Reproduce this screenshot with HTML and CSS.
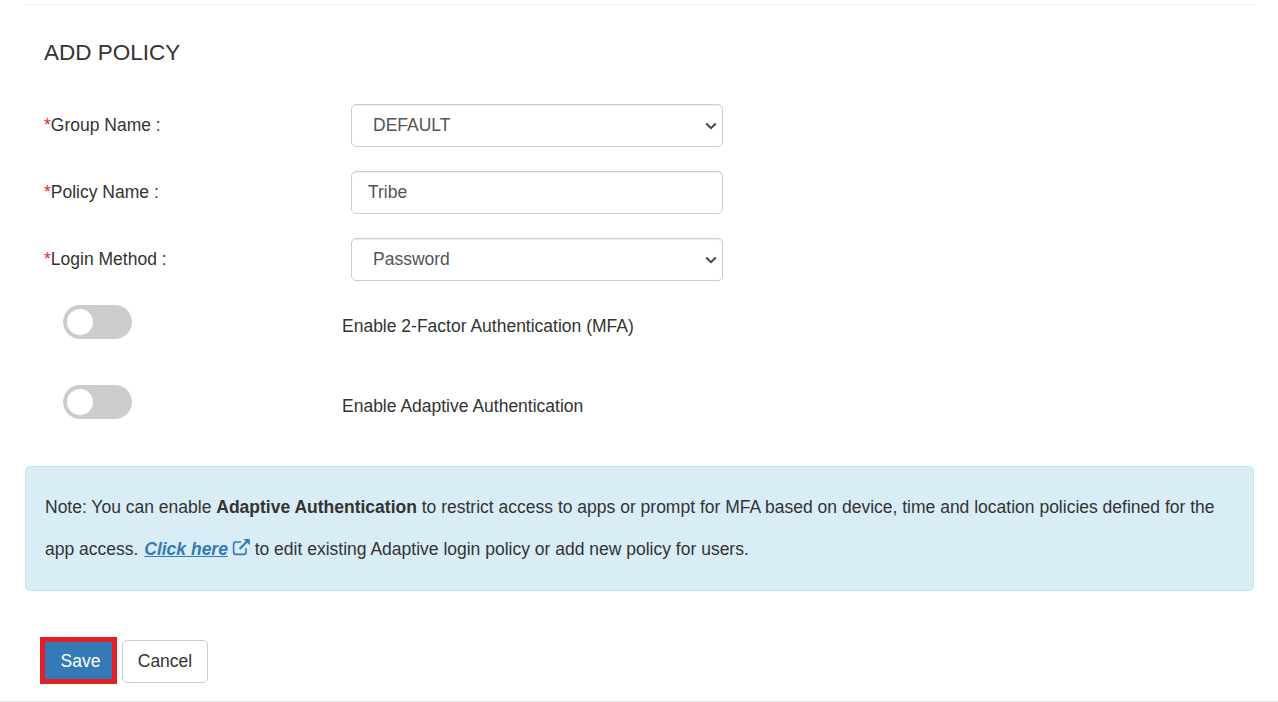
FILE: index.html
```html
<!DOCTYPE html>
<html lang="en">
<head>
  <meta charset="UTF-8">
  <title>Add Policy</title>
  <link rel="stylesheet" href="styles.css">
</head>
<body>

  <div class="page">
    <hr class="top-rule">

    <h3 class="title">ADD POLICY</h3>

    <!-- Policy form -->
    <div class="form-row">
      <label for="group"><span class="req">*</span>Group Name :</label>
      <select id="group" class="field field-select">
        <option>DEFAULT</option>
      </select>
    </div>

    <div class="form-row">
      <label for="policy"><span class="req">*</span>Policy Name :</label>
      <input id="policy" class="field" type="text" value="Tribe">
    </div>

    <div class="form-row">
      <label for="method"><span class="req">*</span>Login Method :</label>
      <select id="method" class="field field-select">
        <option>Password</option>
      </select>
    </div>

    <div class="toggle-row">
      <span class="toggle"><span class="knob"></span></span>
      <span class="toggle-label">Enable 2-Factor Authentication (MFA)</span>
    </div>

    <div class="toggle-row">
      <span class="toggle"><span class="knob"></span></span>
      <span class="toggle-label">Enable Adaptive Authentication</span>
    </div>

    <!-- Note -->
    <div class="note">
      Note: You can enable <strong>Adaptive Authentication</strong> to restrict access to apps or prompt for MFA based on device, time and location policies defined for the app access.
      <a href="#" class="note-link">Click here</a>
      <svg class="ext-icon" width="19" height="18" viewBox="0 0 19 18" fill="none" stroke="#337ab7" stroke-width="1.6">
        <path d="M14 10v4a2.4 2.4 0 0 1-2.4 2.4H4A2.4 2.4 0 0 1 1.6 14V6.4A2.4 2.4 0 0 1 4 4h5"/>
        <path d="M7.5 11 16 2.5" stroke-width="2.2"/>
        <path d="M11.5 1h6.3v6.3z" fill="#337ab7" stroke="none"/>
      </svg>
      to edit existing Adaptive login policy or add new policy for users.
    </div>

    <div class="actions">
      <button class="btn btn-save">Save</button>
      <button class="btn btn-cancel">Cancel</button>
    </div>
  </div>

  <div class="bottom-rule"></div>

</body>
</html>
```

FILE: styles.css
```css
* {
  box-sizing: border-box;
}

body {
  margin: 0;
  height: 702px;
  overflow: hidden;
  font-family: "Liberation Sans", Arial, sans-serif;
  font-size: 17.5px;
  color: #333;
  background-color: #fff;
}

.page {
  height: 701px;
  padding: 4px 24px 0 25px;
}

.top-rule {
  margin: 0;
  border: none;
  border-top: 1px solid #eee;
}

.title {
  margin: 35px 0 39px 19px;
  font-size: 22.5px;
  font-weight: 400;
  line-height: 25px;
}

/* Form rows */
.form-row {
  display: flex;
  align-items: center;
  height: 43px;
  margin-bottom: 24px;
  padding-left: 19px;
}

.form-row label {
  width: 307px;
}

.req {
  color: #e3263a;
}

.field {
  width: 372px;
  height: 43px;
  padding: 0 16px;
  font-family: inherit;
  font-size: 17.5px;
  color: #555;
  background-color: #fff;
  border: 1px solid #ccc;
  border-radius: 5px;
  box-shadow: inset 0 1px 1px rgba(0,0,0,0.075);
}

.field-select {
  appearance: none;
  padding: 0 30px 1px 21px;
  background-image: url("data:image/svg+xml,%3Csvg xmlns='http://www.w3.org/2000/svg' width='12' height='8' viewBox='0 0 12 8'%3E%3Cpath d='M1.2 1.5 6 6.2l4.8-4.7' fill='none' stroke='%23444' stroke-width='2'/%3E%3C/svg%3E");
  background-repeat: no-repeat;
  background-position: right 5px center;
}

/* Toggles */
.toggle-row {
  display: flex;
  height: 80px;
  padding-left: 38px;
}

.toggle {
  display: block;
  width: 69px;
  height: 34px;
  padding: 4px;
  background-color: #ccc;
  border-radius: 34px;
}

.knob {
  display: block;
  width: 26px;
  height: 26px;
  background-color: #fff;
  border-radius: 50%;
}

.toggle-label {
  margin-left: 210px;
  padding-top: 10px;
  line-height: 22px;
}

/* Note box */
.note {
  height: 125px;
  margin-top: 1px;
  padding: 19px 19px 20px;
  line-height: 42px;
  background-color: #d9edf7;
  border: 1px solid #bce8f1;
  border-radius: 5px;
}

.note-link {
  margin-left: 1px;
  font-weight: 700;
  font-style: italic;
  color: #337ab7;
}

.ext-icon {
  margin: 0 -1px 0 -1px;
  vertical-align: -1px;
}

/* Buttons */
.actions {
  display: flex;
  align-items: center;
  gap: 5px;
  margin: 46px 0 0 15px;
}

.btn {
  height: 43px;
  font-family: inherit;
  font-size: 17.5px;
  border-radius: 5px;
}

.btn-save {
  width: 77px;
  height: 47px;
  padding: 2px 0 0 4px;
  color: #fff;
  background-color: #337ab7;
  border: 5px solid #e11f2b;
  border-radius: 0;
}

.btn-cancel {
  width: 86px;
  margin-top: 2px;
  color: #333;
  background-color: #fff;
  border: 1px solid #ccc;
}

.bottom-rule {
  height: 1px;
  background-color: #ddd;
}
```
